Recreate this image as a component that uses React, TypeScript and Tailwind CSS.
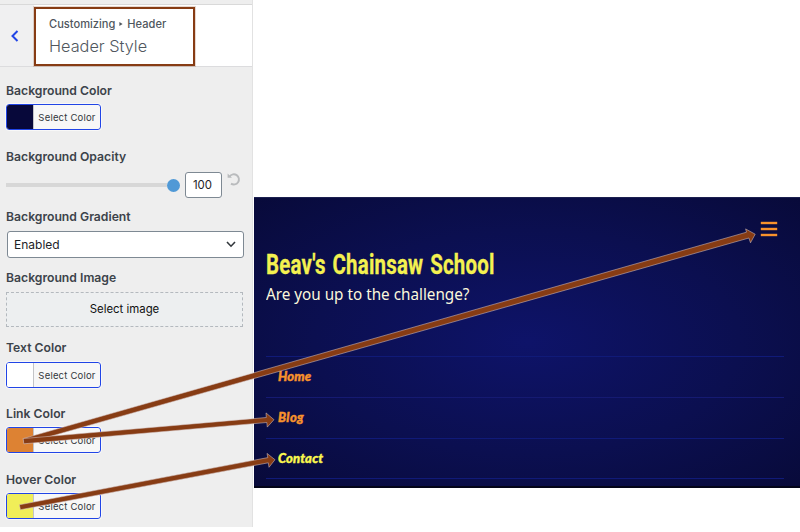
import type { ReactNode } from "react";

function Label({ children, className }: { children: ReactNode; className: string }) {
  return (
    <div className={`h-4 whitespace-nowrap text-[12.2px] font-semibold leading-[18px] text-[#3c434a] ${className}`}>
      {children}
    </div>
  );
}

function ColorButton({ swatch, className }: { swatch: string; className: string }) {
  return (
    <button
      className={`flex h-[26px] w-[95px] overflow-hidden rounded-[3px] border border-[#2145e6] bg-[#f7f7f7] outline outline-1 outline-white/60 ${className}`}
    >
      <span className={`h-full w-[27px] shrink-0 border-r border-[#c3c4c7] ${swatch}`} />
      <span className="flex-1 whitespace-nowrap text-center text-[9.5px] leading-[25px] tracking-[0.2px] text-[#32373c]">
        Select Color
      </span>
    </button>
  );
}

const arrows = [
  "M23.2 438.6 L746.5 232.2 L745.6 228.9 L755.2 234.2 L750.5 242.8 L748.9 238 L24.4 443.7Z",
  "M23.2 438.6 L266.3 417.5 L266 412.9 L274 419.7 L267.3 427.1 L266.8 422.5 L23.8 443.8Z",
  "M19.4 504.8 L267.8 457.6 L267 453.4 L275 459.7 L269 467.3 L268.3 462.8 L20.4 509.7Z",
];

export default function App() {
  return (
    <div className="relative flex h-[532px] w-[800px] overflow-hidden bg-white font-['Inter','Liberation_Sans',sans-serif]">
      <aside className="h-[527px] w-[253px] shrink-0 border-r border-[#e2e2e2] bg-[#eeeeee]">
        <div className="h-[5px] border-b border-[#d9d9d9]" />
        <header className="flex h-[62px] border-b border-[#dcdcde] bg-white">
          <button className="flex w-[34px] items-center justify-center bg-[#f0f0f1] pr-1">
            <svg width="8" height="12" viewBox="0 0 8 12" fill="none" stroke="#2145e6" strokeWidth="2">
              <path d="M6.5 1 L1.5 6 L6.5 11" />
            </svg>
          </button>
          <div className="mt-[2px] h-[59px] w-[161px] border-2 border-[#873c14] bg-white pl-[13px] pt-[6px] outline outline-1 outline-[#873c14]/20">
            <div className="flex h-[18px] items-center gap-1 whitespace-nowrap text-[11.1px] font-medium text-[#50575e]">
              <span>Customizing</span>
              <svg width="4" height="4" viewBox="0 0 4 5" fill="#50575e">
                <path d="M0 0 L4 2.5 L0 5Z" />
              </svg>
              <span>Header</span>
            </div>
            <div className="h-6 whitespace-nowrap text-[16.3px] font-light leading-[26px] text-[#50575e]">
              Header Style
            </div>
          </div>
        </header>

        <div className="pl-[6px] pr-[9px] pt-[15px]">
          <Label className="">Background Color</Label>
          <ColorButton swatch="bg-[#07083a]" className="mt-[6px]" />

          <Label className="mt-[18px]">Background Opacity</Label>
          <div className="mt-[7px] flex h-[27px] items-center">
            <div className="flex h-full w-[174px] items-center pt-[1px]">
              <div className="h-1 flex-1 bg-[#d7d7d7]" />
              <div className="h-[13px] w-[13px] rounded-full bg-[#5099d6]" />
            </div>
            <div className="ml-[5px] flex h-[26px] w-[37px] items-center justify-center rounded-[3px] border border-[#7e8993] bg-white pr-[2px] pt-[2px] text-[11.4px] text-[#1d2327]">
              100
            </div>
            <svg className="-mt-[11px] ml-[5px]" width="14" height="14" viewBox="0 0 14 14" fill="none" stroke="#b9bbbd" strokeWidth="1.9">
              <path d="M2.6 4.5 A5.1 5.1 0 1 1 4 11.6" />
              <path d="M0.6 1.4 V5.8 H5 Z" fill="#b9bbbd" stroke="none" />
            </svg>
          </div>

          <Label className="mt-[10px]">Background Gradient</Label>
          <div className="ml-px mt-[7px] flex h-[27px] w-[237px] items-center justify-between rounded-[3px] border border-[#7e8993] bg-white pl-[6px] pr-[7px] text-[12px] text-[#1d2327]">
            <span className="pt-px">Enabled</span>
            <svg width="10" height="7" viewBox="0 0 10 7" fill="none" stroke="#32373c" strokeWidth="1.6">
              <path d="M1 1 L5 5.2 L9 1" />
            </svg>
          </div>

          <Label className="mt-[11px]">Background Image</Label>
          <button className="mt-[7px] block h-[35px] w-[237px] border border-dashed border-[#b4b9be] bg-[#edeff0] pt-px text-[11.4px] text-[#111]">
            Select image
          </button>

          <Label className="mt-[12px]">Text Color</Label>
          <ColorButton swatch="bg-white" className="mt-[7px]" />

          <Label className="mt-[17px]">Link Color</Label>
          <ColorButton swatch="bg-[#dd8233]" className="mt-[6px]" />

          <Label className="mt-[18px]">Hover Color</Label>
          <ColorButton swatch="bg-[#f0ee58]" className="mt-[6px]" />
        </div>
      </aside>

      <main className="ml-px mt-[197px] h-[291px] min-w-0 flex-1 border-b-2 border-t border-b-[#030418] border-t-[#1c2050] bg-[radial-gradient(ellipse_at_center,#0e1369_0%,#0b0f50_55%,#080a3a_100%)] pl-3 pr-4">
        <div className="flex h-[158px] justify-between">
          <div className="pt-[46px]">
            <h1 className="h-[38px] w-[230px] origin-left scale-x-[0.757] whitespace-nowrap font-['Roboto','Open_Sans',sans-serif] text-[27px] font-bold leading-[43px] tracking-[0.3px] [word-spacing:2px] text-[#f4f150] [-webkit-text-stroke:0.3px_currentColor]">
              Beav's Chainsaw School
            </h1>
            <p className="h-6 w-[204px] origin-left scale-x-[0.897] whitespace-nowrap font-['Noto_Sans','Open_Sans',sans-serif] text-[17px] leading-6 text-[#fbf8dc]">
              Are you up to the challenge?
            </p>
          </div>
          <button className="mr-[7px] mt-6 flex h-[14px] w-4 flex-col justify-between">
            <span className="h-[2px] w-full bg-[#f8922c] shadow-[0_0_0.5px_0.2px_#f8922c]" />
            <span className="h-[2px] w-full bg-[#f8922c] shadow-[0_0_0.5px_0.2px_#f8922c]" />
            <span className="h-[2px] w-full bg-[#f8922c] shadow-[0_0_0.5px_0.2px_#f8922c]" />
          </button>
        </div>
        <nav className="border-b border-[#101a78] font-['Lato',sans-serif] text-[13px] font-black italic text-[#f8922c] [-webkit-text-stroke:0.4px_currentColor]">
          <a className="flex h-[41px] items-center border-t border-[#101a78] pl-3 tracking-[0.1px]">Home</a>
          <a className="flex h-[41px] items-center border-t border-[#151a72] pl-3 tracking-[0.4px]">Blog</a>
          <a className="flex h-[40px] items-center border-t border-[#101a78] pl-3 tracking-[0.2px] text-[#fbf84e]">Contact</a>
        </nav>
      </main>

      <svg className="pointer-events-none absolute inset-0" width="800" height="532" viewBox="0 0 800 532">
        {arrows.map((d) => (
          <path key={d} d={d} fill="#873c14" stroke="#d8c8c8" strokeOpacity="0.75" strokeWidth="0.7" />
        ))}
      </svg>
    </div>
  );
}
